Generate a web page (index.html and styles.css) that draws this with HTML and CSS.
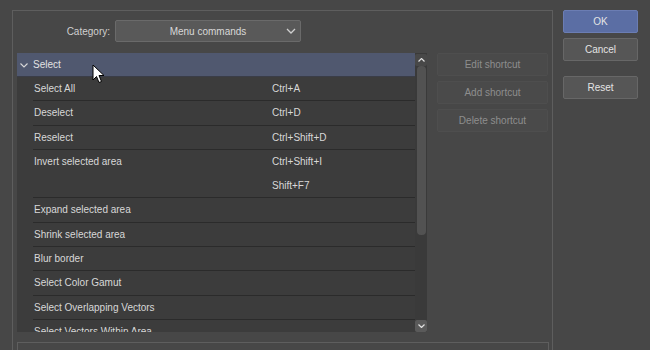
FILE: index.html
```html
<!DOCTYPE html>
<html lang="en">
<head>
    <meta charset="UTF-8">
    <title>Shortcut settings</title>
    <link rel="stylesheet" href="styles.css">
</head>
<body>

<div class="dialog">
    <div class="panel">
        <!-- category -->
        <div class="category">
            <span class="category-label">Category:</span>
            <div class="select">
                <span>Menu commands</span>
                <svg class="select-chev" width="10" height="6" viewBox="0 0 10 6"><path d="M1 1 L5 5 L9 1" fill="none" stroke="#cfcfcf" stroke-width="1.3"/></svg>
            </div>
        </div>

        <div class="content">
            <!-- command list -->
            <div class="list">
                <div class="rows">
                    <div class="group">
                        <svg width="8" height="5" viewBox="0 0 8 5"><path d="M0.5 0.5 L4 4 L7.5 0.5" fill="none" stroke="#d8d8d8" stroke-width="1.1"/></svg>
                        <span>Select</span>
                    </div>
                    <div class="row"><span>Select All</span><span>Ctrl+A</span></div>
                    <div class="row"><span>Deselect</span><span>Ctrl+D</span></div>
                    <div class="row"><span>Reselect</span><span>Ctrl+Shift+D</span></div>
                    <div class="row row-double"><span>Invert selected area</span><span>Ctrl+Shift+I<br>Shift+F7</span></div>
                    <div class="row"><span>Expand selected area</span><span></span></div>
                    <div class="row"><span>Shrink selected area</span><span></span></div>
                    <div class="row"><span>Blur border</span><span></span></div>
                    <div class="row"><span>Select Color Gamut</span><span></span></div>
                    <div class="row"><span>Select Overlapping Vectors</span><span></span></div>
                    <div class="row"><span>Select Vectors Within Area</span><span></span></div>
                </div>
                <div class="scrollbar">
                    <div class="scroll-btn">
                        <svg width="7" height="4" viewBox="0 0 7 4"><path d="M0.5 3.5 L3.5 0.5 L6.5 3.5" fill="none" stroke="#e0e0e0" stroke-width="1.2"/></svg>
                    </div>
                    <div class="scroll-track"><div class="scroll-thumb"></div></div>
                    <div class="scroll-btn scroll-btn-down">
                        <svg width="7" height="4" viewBox="0 0 7 4"><path d="M0.5 0.5 L3.5 3.5 L6.5 0.5" fill="none" stroke="#e0e0e0" stroke-width="1.2"/></svg>
                    </div>
                </div>
            </div>

            <!-- shortcut buttons -->
            <div class="side">
                <button class="side-btn">Edit shortcut</button>
                <button class="side-btn">Add shortcut</button>
                <button class="side-btn">Delete shortcut</button>
            </div>
        </div>

        <div class="bottom"></div>
    </div>

    <div class="actions">
        <button class="btn btn-ok">OK</button>
        <button class="btn">Cancel</button>
        <button class="btn btn-reset">Reset</button>
    </div>
</div>

<!-- mouse pointer -->
<svg class="cursor" width="13" height="20" viewBox="0 0 13 20">
    <path d="M1 1 L1 16 L4.5 12.5 L7 18.5 L9.5 17.5 L7 11.5 L12 11.5 Z" fill="#ffffff" stroke="#000000" stroke-width="1"/>
</svg>

</body>
</html>
```

FILE: styles.css
```css
html, body {
    margin: 0;
    height: 350px;
    overflow: hidden;
}
body {
    background-color: #474747;
    font-family: "Liberation Sans", Arial, sans-serif;
    font-size: 10px;
    color: #d8d8d8;
    position: relative;
}
.dialog {
    display: flex;
    gap: 10px;
    padding: 10px 0 0 12px;
}
.panel {
    width: 531px;
    height: 331px;
    padding: 9px 4px 0 4px;
    border: 1px solid #5e5e5e;
    border-bottom: none;
}
.category {
    display: flex;
    align-items: center;
    height: 22px;
}
.category-label {
    width: 93px;
    text-align: right;
    margin-right: 5px;
    color: #cfcfcf;
}
.select {
    width: 184px;
    height: 20px;
    background-color: #595959;
    border: 1px solid #6a6a6a;
    border-radius: 2px;
    display: flex;
    align-items: center;
    justify-content: center;
    position: relative;
    color: #d8d8d8;
}
.select-chev {
    position: absolute;
    right: 4px;
    top: 7px;
}
.content {
    display: flex;
    gap: 10px;
    margin-top: 11px;
}
.list {
    display: flex;
    width: 410px;
    height: 279px;
    overflow: hidden;
}
.rows {
    flex: 1;
    background-color: #3c3c3c;
    overflow: hidden;
}
.group {
    height: 23px;
    background-color: #50586f;
    display: flex;
    align-items: center;
    gap: 5px;
    padding-left: 3px;
    color: #e2e2e2;
    border-bottom: 1px solid #3a3d48;
}
.group svg {
    margin-top: 2px;
}
.row {
    display: grid;
    grid-template-columns: 238px 1fr;
    margin-left: 16px;
    padding-left: 1px;
    height: 23.4px;
    line-height: 23.4px;
    border-bottom: 1px solid #2b2b2b;
    white-space: nowrap;
}
.row-double {
    height: 47px;
    line-height: 23.5px;
}
.scrollbar {
    width: 12px;
    background-color: #3a3a3a;
    display: flex;
    flex-direction: column;
}
.scroll-btn {
    height: 12px;
    display: flex;
    align-items: center;
    justify-content: center;
    background-color: #484848;
    border-radius: 2px;
    margin-top: 1px;
}
.scroll-btn-down {
    background-color: #5a5a5a;
    margin-top: 0;
}
.scroll-track {
    flex: 1;
    padding: 0 1px 0 2px;
}
.scroll-thumb {
    height: 169px;
    background-color: #525252;
    border-radius: 4px;
}
.side {
    display: flex;
    flex-direction: column;
    gap: 5px;
    width: 111px;
}
.side-btn {
    height: 23px;
    background-color: #4a4a4a;
    border: 1px solid #4e4e4e;
    border-radius: 2px;
    color: #8e8e8e;
    font-family: inherit;
    font-size: 10px;
    padding: 0;
}
.bottom {
    margin-top: 10px;
    height: 7px;
    border: 1px solid #5e5e5e;
    border-bottom: none;
    width: 530px;
}
.actions {
    display: flex;
    flex-direction: column;
    gap: 5px;
    width: 75px;
}
.btn {
    height: 23px;
    background-color: #565656;
    border: 1px solid #676767;
    border-radius: 2px;
    color: #e4e4e4;
    font-family: inherit;
    font-size: 10px;
    padding: 0;
}
.btn-ok {
    background-color: #5b6ea4;
    border-color: #6b7db3;
}
.btn-reset {
    margin-top: 10px;
}
.cursor {
    position: absolute;
    left: 92px;
    top: 64px;
}
```
